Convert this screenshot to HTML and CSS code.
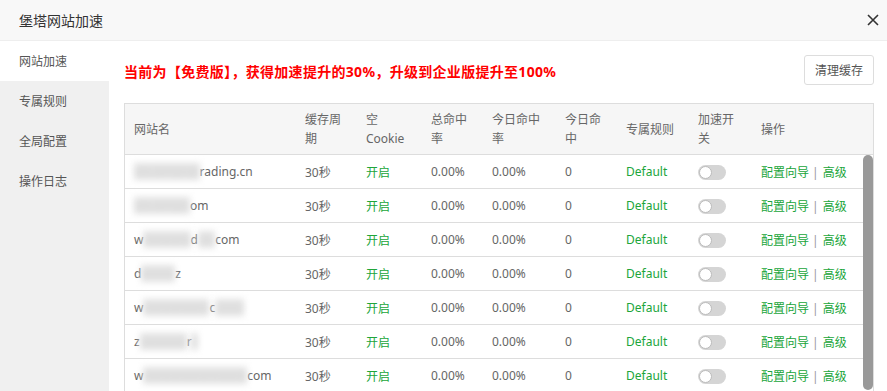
FILE: index.html
```html
<!DOCTYPE html>
<html lang="zh-CN">
<head>
    <meta charset="UTF-8">
    <title>堡塔网站加速</title>
    <link rel="stylesheet" href="styles.css">
</head>
<body>
    <div class="dialog">
        <div class="dialog-title">
            <span>堡塔网站加速</span>
            <svg class="close" width="12" height="12" viewBox="0 0 12 12"><path d="M1 1L11 11M11 1L1 11" stroke="#333" stroke-width="1.6"/></svg>
        </div>
        <div class="dialog-body">
            <ul class="side-menu">
                <li class="active">网站加速</li>
                <li>专属规则</li>
                <li>全局配置</li>
                <li>操作日志</li>
            </ul>
            <div class="main">
                <div class="toolbar">
                    <span class="notice">当前为【免费版】，获得加速提升的30%，升级到企业版提升至100%</span>
                    <button class="btn">清理缓存</button>
                </div>
                <div class="table-box">
                    <table class="grid head">
                        <colgroup>
                            <col style="width:171px"><col style="width:61px"><col style="width:65px"><col style="width:61px"><col style="width:73px"><col style="width:61px"><col style="width:72px"><col style="width:63px"><col>
                        </colgroup>
                        <thead>
                            <tr>
                                <th>网站名</th>
                                <th>缓存周期</th>
                                <th>空 Cookie</th>
                                <th>总命中率</th>
                                <th>今日命中率</th>
                                <th>今日命中</th>
                                <th>专属规则</th>
                                <th>加速开关</th>
                                <th>操作</th>
                            </tr>
                        </thead>
                    </table>
                    <div class="scroll">
                        <table class="grid">
                            <colgroup>
                                <col style="width:171px"><col style="width:61px"><col style="width:65px"><col style="width:61px"><col style="width:73px"><col style="width:61px"><col style="width:72px"><col style="width:63px"><col>
                            </colgroup>
                            <tbody id="rows"></tbody>
                        </table>
                        <div class="scrollbar"><div class="thumb"></div></div>
                    </div>
                </div>
            </div>
        </div>
    </div>
    <script>
        // site names are partly masked, like the original capture
        var sites = [
            ['', 'abcdefghijk', 'rading.cn'],
            ['', 'abcdefghi', 'om'],
            ['w', 'wwwww', 'd', 'sss', 'com'],
            ['d', 'eeeee', 'z'],
            ['w', 'wwwwwww', 'c', 'oooo'],
            ['z', 'aaaaaaa', 'r', 'a'],
            ['w', 'wwwwwwwwwww', 'com']
        ];

        function siteName(parts) {
            var html = '';
            parts.forEach(function (p, i) {
                if (i % 2 === 1) {
                    html += '<span class="mask">' + p + '</span>';
                } else {
                    html += p;
                }
            });
            return html;
        }

        var tbody = document.getElementById('rows');
        sites.forEach(function (s) {
            tbody.innerHTML += '<tr>' +
                '<td>' + siteName(s) + '</td>' +
                '<td>30秒</td>' +
                '<td class="green">开启</td>' +
                '<td>0.00%</td>' +
                '<td>0.00%</td>' +
                '<td>0</td>' +
                '<td class="green">Default</td>' +
                '<td><span class="switch"></span></td>' +
                '<td><a class="green">配置向导</a><span class="sep">|</span><a class="green">高级</a></td>' +
                '</tr>';
        });
    </script>
</body>
</html>
```

FILE: styles.css
```css
html, body {
    margin: 0;
    padding: 0;
    overflow: hidden;
}

body {
    font-family: "Noto Sans", "Noto Sans CJK SC", sans-serif;
    color: #666;
    background: #fff;
}

.dialog {
    width: 887px;
    height: 391px;
    overflow: hidden;
    display: flex;
    flex-direction: column;
}

.dialog-title {
    height: 40px;
    flex-shrink: 0;
    border-bottom: 1px solid #eee;
    background-color: #f8f8f8;
    display: flex;
    align-items: center;
    justify-content: space-between;
    padding: 0 8px 0 19px;
    font-size: 14px;
    color: #333;
}

.dialog-body {
    flex: 1;
    display: flex;
    min-height: 0;
}

.side-menu {
    width: 109px;
    margin: 0;
    padding: 0;
    list-style: none;
    background-color: #f0f0f0;
    flex-shrink: 0;
}

.side-menu li {
    height: 40px;
    line-height: 42px;
    padding-left: 19px;
    font-size: 12px;
    color: #555;
}

.side-menu li.active {
    background-color: #fff;
}

.main {
    flex: 1;
    padding: 14px 13px 0 15px;
    min-width: 0;
}

.toolbar {
    display: flex;
    align-items: center;
    justify-content: space-between;
    height: 30px;
}

.notice {
    color: #f00;
    font-size: 14px;
    font-weight: bold;
    padding-top: 2px;
    letter-spacing: 0.3px;
}

.btn {
    width: 70px;
    height: 30px;
    border: 1px solid #ddd;
    border-radius: 3px;
    background: #fff;
    color: #555;
    font-family: inherit;
    font-size: 12px;
    padding: 0;
}

.table-box {
    margin-top: 18px;
    border: 1px solid #ddd;
    border-bottom: none;
}

.grid {
    width: 100%;
    border-collapse: collapse;
    table-layout: fixed;
    font-size: 12px;
}

.grid.head {
    background-color: #f6f6f6;
}

.grid th {
    height: 50px;
    padding: 0 10px 0 9px;
    text-align: left;
    font-weight: normal;
    line-height: 19px;
    color: #666;
    border-bottom: 1px solid #ddd;
}

.grid td {
    height: 33px;
    padding: 0 10px 0 9px;
    border-bottom: 1px solid #ddd;
    white-space: nowrap;
    overflow: hidden;
}

.scroll {
    height: 253px;
    overflow: hidden;
    display: flex;
    align-items: flex-start;
}

.scroll .grid {
    flex: 1;
}

.scrollbar {
    width: 10px;
    height: 100%;
    flex-shrink: 0;
    background: #fff;
}

.thumb {
    height: 235px;
    border-radius: 5px;
    background: #999;
}

.green {
    color: #20a53a;
}

.sep {
    color: #999;
    margin: 0 4px 0 3px;
}

.mask {
    color: #d8d8d8;
    background: #e2e2e2;
    filter: blur(3px);
}

.switch {
    display: inline-block;
    width: 28px;
    height: 15px;
    border-radius: 8px;
    background-color: #d5d5d5;
    position: relative;
    vertical-align: middle;
}

.switch::after {
    content: "";
    position: absolute;
    left: 1px;
    top: 1px;
    width: 11px;
    height: 11px;
    border-radius: 50%;
    background: #fff;
    border: 1px solid #bbb;
}
```
